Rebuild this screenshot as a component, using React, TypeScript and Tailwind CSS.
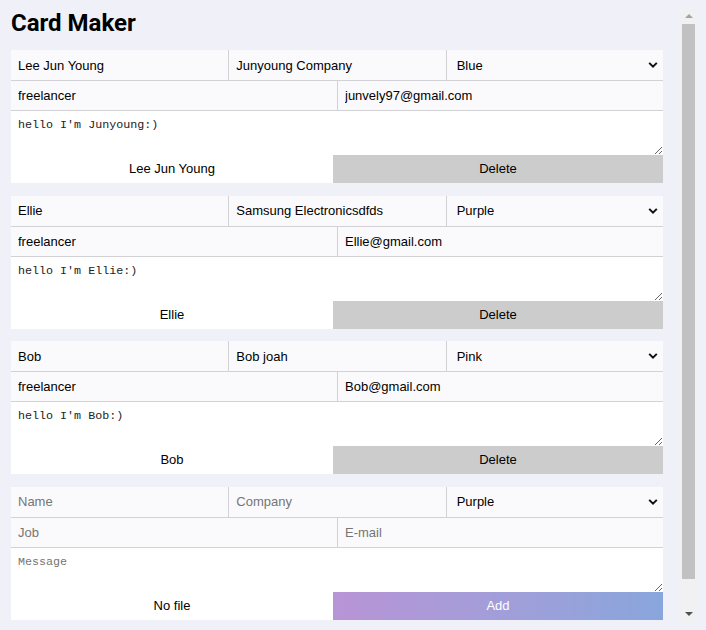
import { useState } from 'react';

interface Card {
  id: number;
  name: string;
  company: string;
  theme: string;
  title: string;
  email: string;
  message: string;
}

const initialCards: Card[] = [
  {
    id: 1,
    name: 'Lee Jun Young',
    company: 'Junyoung Company',
    theme: 'Blue',
    title: 'freelancer',
    email: 'junvely97@gmail.com',
    message: "hello I'm Junyoung:)",
  },
  {
    id: 2,
    name: 'Ellie',
    company: 'Samsung Electronicsdfds',
    theme: 'Purple',
    title: 'freelancer',
    email: 'Ellie@gmail.com',
    message: "hello I'm Ellie:)",
  },
  {
    id: 3,
    name: 'Bob',
    company: 'Bob joah',
    theme: 'Pink',
    title: 'freelancer',
    email: 'Bob@gmail.com',
    message: "hello I'm Bob:)",
  },
];

const themes = ['Blue', 'Purple', 'Pink', 'Light', 'Dark', 'Colorful'];

const inputCls =
  'h-full w-full min-w-0 bg-[#fafafd] px-[7px] text-[13px] text-black outline-none placeholder:text-[#757575] font-["Liberation_Sans",Arial,sans-serif]';

function ThemeSelect({ value, onChange }: { value: string; onChange: (v: string) => void }) {
  return (
    <div className="relative h-full border-l border-[#d2d2d6]">
      <select
        value={value}
        onChange={(e) => onChange(e.target.value)}
        className='h-full w-full appearance-none bg-[#fafafd] pl-[10px] pt-[1px] text-[13px] text-black outline-none font-["Liberation_Sans",Arial,sans-serif]'
      >
        {themes.map((t) => (
          <option key={t} value={t}>
            {t}
          </option>
        ))}
      </select>
      {/* chevron */}
      <svg
        className="pointer-events-none absolute right-[5px] top-1/2 -translate-y-1/2"
        width="10"
        height="7"
        viewBox="0 0 10 7"
      >
        <path d="M1.2 1.4 L5 5.2 L8.8 1.4" fill="none" stroke="#111" strokeWidth="2" />
      </svg>
    </div>
  );
}

function CardForm({
  card,
  onChange,
  isNew,
  onButton,
}: {
  card: Card;
  onChange: (c: Card) => void;
  isNew?: boolean;
  onButton: () => void;
}) {
  const set = (key: keyof Card) => (e: { target: { value: string } }) =>
    onChange({ ...card, [key]: e.target.value });

  return (
    <form className="flex h-[133px] w-[652px] flex-col" onSubmit={(e) => e.preventDefault()}>
      <div className="grid h-[31px] grid-cols-3 border-b border-[#d2d2d6]">
        <input className={inputCls} value={card.name} onChange={set('name')} placeholder="Name" />
        <div className="border-l border-[#d2d2d6]">
          <input className={inputCls} value={card.company} onChange={set('company')} placeholder="Company" />
        </div>
        <ThemeSelect value={card.theme} onChange={(v) => onChange({ ...card, theme: v })} />
      </div>
      <div className="grid h-[30px] grid-cols-2 border-b border-[#d2d2d6]">
        <input className={inputCls} value={card.title} onChange={set('title')} placeholder="Job" />
        <div className="border-l border-[#d2d2d6]">
          <input className={inputCls} value={card.email} onChange={set('email')} placeholder="E-mail" />
        </div>
      </div>
      <textarea
        className='h-[44px] w-full bg-white px-[7px] pt-[7px] text-[11.7px] leading-[15px] text-[#222] outline-none placeholder:text-[#757575] font-["Liberation_Mono","DejaVu_Sans_Mono",monospace]'
        value={card.message}
        onChange={set('message')}
        placeholder="Message"
      />
      <div className="flex h-[28px]">
        <button
          type="button"
          className='w-[322px] bg-white text-[13px] text-black font-["Liberation_Sans",Arial,sans-serif]'
        >
          {isNew ? 'No file' : card.name}
        </button>
        {isNew ? (
          <button
            type="button"
            onClick={onButton}
            className='flex-1 bg-gradient-to-r from-[#b894d6] to-[#88a6dc] text-[13px] text-white font-["Liberation_Sans",Arial,sans-serif]'
          >
            Add
          </button>
        ) : (
          <button
            type="button"
            onClick={onButton}
            className='flex-1 bg-[#cccccc] text-[13px] text-black font-["Liberation_Sans",Arial,sans-serif]'
          >
            Delete
          </button>
        )}
      </div>
    </form>
  );
}

export default function App() {
  const [cards, setCards] = useState<Card[]>(initialCards);
  const [draft, setDraft] = useState<Card>({
    id: 0,
    name: '',
    company: '',
    theme: 'Purple',
    title: '',
    email: '',
    message: '',
  });

  return (
    <div className="flex h-[630px] w-[706px] overflow-hidden bg-[#eff0f8]">
      {/* Editor */}
      <section className="flex w-[680px] flex-col pl-[11px]">
        <h1 className='mt-[7px] h-[32px] text-[24px] font-bold leading-[32px] text-black font-["Roboto",sans-serif]'>
          Card Maker
        </h1>
        <div className="mt-[11px] flex flex-col gap-[12.5px]">
          {cards.map((card) => (
            <CardForm
              key={card.id}
              card={card}
              onChange={(c) => setCards(cards.map((x) => (x.id === c.id ? c : x)))}
              onButton={() => setCards(cards.filter((x) => x.id !== card.id))}
            />
          ))}
          <CardForm
            card={draft}
            onChange={setDraft}
            isNew
            onButton={() => {
              if (!draft.name) return;
              setCards([...cards, { ...draft, id: Date.now() }]);
              setDraft({ ...draft, name: '', company: '', title: '', email: '', message: '' });
            }}
          />
        </div>
      </section>

      {/* Scrollbar */}
      <div className="mt-[8px] mb-[8px] flex w-[17px] flex-col items-center bg-[#f1f1f4]">
        <div className="flex h-[16px] items-center justify-center">
          <div className="h-0 w-0 border-x-[4px] border-b-[4px] border-x-transparent border-b-[#a3a3a3]" />
        </div>
        <div className="h-[555px] w-[13px] bg-[#c1c1c1]" />
        <div className="flex-1" />
        <div className="flex h-[16px] items-center justify-center">
          <div className="h-0 w-0 border-x-[4px] border-t-[4px] border-x-transparent border-t-[#505050]" />
        </div>
      </div>
    </div>
  );
}
